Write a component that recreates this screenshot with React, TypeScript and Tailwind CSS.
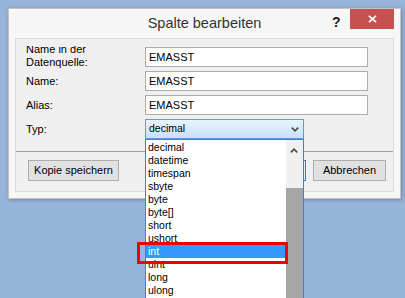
import React from "react";

const items = ["decimal", "datetime", "timespan", "sbyte", "byte", "byte[]", "short", "ushort", "int", "uint", "long", "ulong", "float"];

function Chevron({ up }: { up?: boolean }) {
  return (
    <svg width="8" height="5" viewBox="0 0 8 5" className="block">
      <path d={up ? "M0.8 4.4 L4 1.2 L7.2 4.4" : "M0.8 0.6 L4 3.8 L7.2 0.6"} fill="none" stroke="#4a4a4a" strokeWidth="1.6" />
    </svg>
  );
}

export default function App() {
  const field = "w-[223px] h-[20px] border border-[#acacac] bg-white pl-[3px] flex items-center text-[11px] text-black";
  return (
    <div className="relative w-[405px] h-[298px] overflow-hidden bg-[#97b4dc] font-['Liberation_Sans',Arial,sans-serif]">
      {/* window */}
      <div className="absolute left-[8px] top-[8px] w-[393px] h-[191px] bg-[#f7f7f7] border border-[#c2c2c2] shadow-[1px_1px_4px_rgba(0,0,0,0.25)] flex flex-col">
        <div className="relative h-[29px] flex items-center justify-center">
          <span className="text-[14.5px] text-[#333]">Spalte bearbeiten</span>
          <span className="absolute left-[323px] top-[3px] text-[14px] font-bold text-[#222]">?</span>
          <div className="absolute right-[6px] top-0 w-[44px] h-[20px] bg-[#c75050] flex items-center justify-center">
            <svg width="9" height="8" viewBox="0 0 9 8">
              <path d="M1 0.8 L8 7.2 M8 0.8 L1 7.2" stroke="white" strokeWidth="1.8" />
            </svg>
          </div>
        </div>
        <div className="mx-[6px] h-[154px] border border-[#dadada] bg-[#f0f0f0] flex flex-col">
          <div className="h-[112px] pt-[8px] flex flex-col gap-[4px]">
            <div className="flex h-[20px]">
              <div className="relative w-[129px] pl-[10px] text-[11px] text-black">
                <div className="absolute left-[10px] top-[-1px] h-[25px] overflow-hidden">
                  <div className="mt-[-3px] leading-[13px]">
                    <div>Name in der</div>
                    <div>Datenquelle:</div>
                  </div>
                </div>
              </div>
              <div className={field}>EMASST</div>
            </div>
            <div className="flex h-[20px] items-center">
              <div className="w-[129px] pl-[10px] text-[11px] leading-[13px] text-black">Name:</div>
              <div className={field}>EMASST</div>
            </div>
            <div className="flex h-[20px] items-center">
              <div className="w-[129px] pl-[10px] text-[11px] leading-[13px] text-black">Alias:</div>
              <div className={field}>EMASST</div>
            </div>
            <div className="flex h-[20px] items-center">
              <div className="w-[129px] pl-[10px] text-[11px] leading-[13px] text-black">Typ:</div>
              <div className="w-[159px] h-[20px] border border-[#569de5] bg-gradient-to-b from-[#eaf3fc] to-[#c8e1f8] pl-[3px] pr-[4px] flex items-center justify-between text-[10.5px] text-black">
                <span>decimal</span>
                <Chevron />
              </div>
            </div>
          </div>
          <div className="h-[1px] bg-[#a0a0a0]" />
          <div className="flex items-start pt-[8px] pl-[12px] pr-[7px]">
            <div className="w-[91px] h-[21px] border border-[#adadad] bg-[#e1e1e1] flex items-center justify-center text-[11px] text-black">Kopie speichern</div>
            <div className="flex-1" />
            <div className="w-[75px] h-[21px] border border-[#3c7fb1] bg-[#e5f1fb] flex items-center justify-center text-[11px] text-black">OK</div>
            <div className="w-[73px] h-[21px] ml-[7px] border border-[#adadad] bg-[#e1e1e1] flex items-center justify-center text-[11px] text-black">Abbrechen</div>
          </div>
        </div>
      </div>

      {/* dropdown list */}
      <div className="absolute left-[145px] top-[139px] w-[159px] h-[175px] border border-[#4d7dbd] bg-white flex">
        <div className="flex-1 pt-[1px] flex flex-col">
          {items.map((it) => (
            <div
              key={it}
              className={`h-[13px] leading-[13px] pl-[2px] text-[10.5px] ${it === "int" ? "bg-[#3399ff] text-white" : "text-black"}`}
            >
              {it}
            </div>
          ))}
        </div>
        <div className="relative w-[17px] bg-[#f0f0f0]">
          <div className="absolute left-[4px] top-[8px]">
            <Chevron up />
          </div>
          <div className="absolute left-0 right-0 top-[48px] bottom-0 bg-[#a6a6a6]" />
        </div>
      </div>

      {/* red highlight */}
      <div className="absolute left-[137px] top-[242px] w-[151px] h-[22px] border-[3px] border-[#ee0000]" />
    </div>
  );
}
